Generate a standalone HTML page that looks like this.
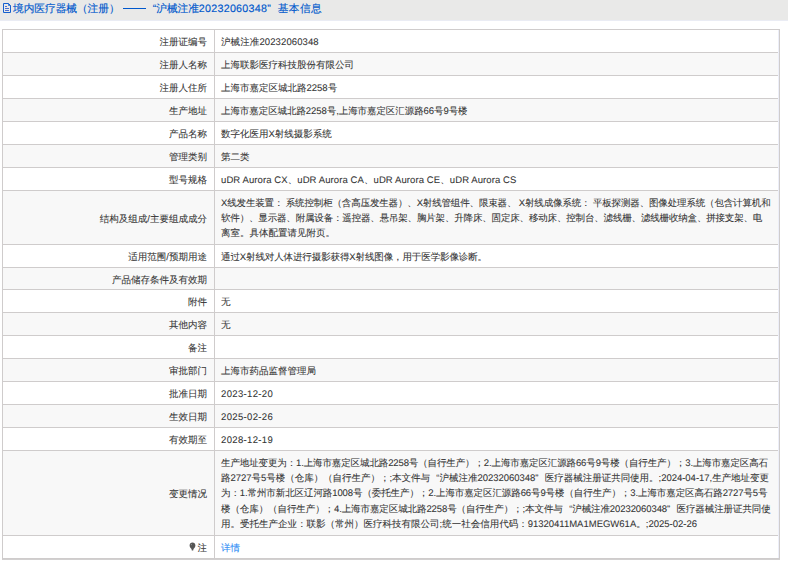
<!DOCTYPE html>
<html><head><meta charset="utf-8">
<style>
html,body{margin:0;padding:0;background:#fff;}
body{text-rendering:geometricPrecision;font-family:"Liberation Sans",sans-serif;color:#333;width:788px;height:567px;overflow:hidden;position:relative;}
.hd{position:absolute;left:0;top:0;width:788px;height:20px;background:#e9e9e8;border-bottom:1px solid #eaecf4;}
.hd .ic{position:absolute;left:0;top:0;}
.hd .t{-webkit-text-stroke:0.15px currentColor;position:absolute;left:13px;top:2px;height:19px;line-height:15px;font-size:10.66px;color:#0058cc;white-space:nowrap;}
.q1,.q2{display:inline-block;width:1em;line-height:10px;}
.q1{text-align:right;}
.dash{display:inline-block;width:23px;height:1.2px;background:#0058cc;margin-left:3px;vertical-align:3px;}
.q2{text-align:left;}
table{position:absolute;left:2px;top:29px;border-collapse:separate;border-spacing:0;width:778px;table-layout:fixed;border-left:1px solid #cfcccc;border-top:1px solid #cfcccc;border-bottom:1px solid #d2d0d0;}
td{-webkit-text-stroke:0.07px currentColor;border-right:1px solid #cfcccc;border-bottom:1px solid #cfcccc;font-size:9.5px;line-height:15.3px;padding:4px 0 0 6px;vertical-align:middle;white-space:nowrap;}
td.l{text-align:right;width:204px;padding:4px 7px 0 0;}
td.m{padding-top:2px;}
.ln{display:block;}
tr:nth-child(even) td{background:#f8f8f8;}
.rc{position:absolute;left:778px;top:30px;width:1px;height:528px;background:#eceef8;}
.dt{letter-spacing:0.35px;}
.lk{color:#2a8af5;}
</style></head><body>
<div class="hd">
<svg class="ic" width="14" height="16" viewBox="0 0 14 16"><path d="M3.5 3.5H8.5L10.5 5.5V12.5H3.5Z" fill="none" stroke="#1560cf" stroke-width="1"/><path d="M8.5 3.5V5.5H10.5" fill="none" stroke="#1560cf" stroke-width="0.8"/><path d="M5 6.5H7M5 8.5H9M5 10.5H9" stroke="#4a6fd0" stroke-width="1"/></svg>
<div class="t">境内医疗器械（注册）<span class="dash"></span><span class="q1">“</span>沪械注准<span style="letter-spacing:0.28px">20232060348</span><span class="q2">”</span><span style="letter-spacing:0.4px">基本信息</span></div>
</div>
<table>
<tr style="height:23px"><td class="l">注册证编号</td><td style="letter-spacing:0.11px">沪械注准20232060348</td></tr>
<tr style="height:23px"><td class="l">注册人名称</td><td>上海联影医疗科技股份有限公司</td></tr>
<tr style="height:23px"><td class="l">注册人住所</td><td>上海市嘉定区城北路2258号</td></tr>
<tr style="height:23px"><td class="l">生产地址</td><td style="letter-spacing:-0.07px">上海市嘉定区城北路2258号,上海市嘉定区汇源路66号9号楼</td></tr>
<tr style="height:23px"><td class="l">产品名称</td><td>数字化医用X射线摄影系统</td></tr>
<tr style="height:23px"><td class="l">管理类别</td><td>第二类</td></tr>
<tr style="height:23px"><td class="l">型号规格</td><td id="r7" style="letter-spacing:0.093px">uDR Aurora CX、uDR Aurora CA、uDR Aurora CE、uDR Aurora CS</td></tr>
<tr style="height:54px"><td class="l">结构及组成/主要组成成分</td><td class="m"><div class="ln" style="letter-spacing:-0.152px">X线发生装置：&nbsp;系统控制柜（含高压发生器）、X射线管组件、限束器、&nbsp;X射线成像系统：&nbsp;平板探测器、图像处理系统（包含计算机和</div><div class="ln" style="letter-spacing:-0.169px">软件）、显示器、附属设备：遥控器、悬吊架、胸片架、升降床、固定床、移动床、控制台、滤线栅、滤线栅收纳盒、拼接支架、电</div><div class="ln">离室。具体配置请见附页。</div></td></tr>
<tr style="height:23px"><td class="l">适用范围/预期用途</td><td style="letter-spacing:-0.11px">通过X射线对人体进行摄影获得X射线图像，用于医学影像诊断。</td></tr>
<tr style="height:22px"><td class="l">产品储存条件及有效期</td><td></td></tr>
<tr style="height:23px"><td class="l">附件</td><td>无</td></tr>
<tr style="height:23px"><td class="l">其他内容</td><td>无</td></tr>
<tr style="height:23px"><td class="l">备注</td><td></td></tr>
<tr style="height:23px"><td class="l">审批部门</td><td>上海市药品监督管理局</td></tr>
<tr style="height:23px"><td class="l">批准日期</td><td class="dt">2023-12-20</td></tr>
<tr style="height:23px"><td class="l">生效日期</td><td class="dt">2025-02-26</td></tr>
<tr style="height:23px"><td class="l">有效期至</td><td class="dt">2028-12-19</td></tr>
<tr style="height:85px"><td class="l">变更情况</td><td class="m"><div class="ln" style="letter-spacing:-0.12px">生产地址变更为：1.上海市嘉定区城北路2258号（自行生产）；2.上海市嘉定区汇源路66号9号楼（自行生产）；3.上海市嘉定区高石</div><div class="ln" style="letter-spacing:-0.022px">路2727号5号楼（仓库）（自行生产）；;本文件与<span class="q1">“</span>沪械注准20232060348<span class="q2">”</span>医疗器械注册证共同使用。;2024-04-17,生产地址变更</div><div class="ln" style="letter-spacing:-0.093px">为：1.常州市新北区辽河路1008号（委托生产）；2.上海市嘉定区汇源路66号9号楼（自行生产）；3.上海市嘉定区高石路2727号5号</div><div class="ln" style="letter-spacing:-0.087px">楼（仓库）（自行生产）；4.上海市嘉定区城北路2258号（自行生产）；;本文件与<span class="q1">“</span>沪械注准20232060348<span class="q2">”</span>医疗器械注册证共同使</div><div class="ln">用。受托生产企业：联影（常州）医疗科技有限公司;统一社会信用代码：91320411MA1MEGW61A。;2025-02-26</div></td></tr>
<tr style="height:23px"><td class="l"><svg width="7" height="9" viewBox="0 0 7 9" style="vertical-align:0px;margin-right:1.5px"><path d="M3.5 0.5C1.8 0.5 0.6 1.8 0.6 3.5C0.6 5 1.6 6 2.5 6.9L2.8 8.5H4.2L4.5 6.9C5.4 6 6.4 5 6.4 3.5C6.4 1.8 5.2 0.5 3.5 0.5Z" fill="#555"/><circle cx="2.4" cy="2.6" r="0.6" fill="#999"/></svg>注</td><td class="lk">详情</td></tr>
</table>
<div class="rc"></div>
</body></html>
